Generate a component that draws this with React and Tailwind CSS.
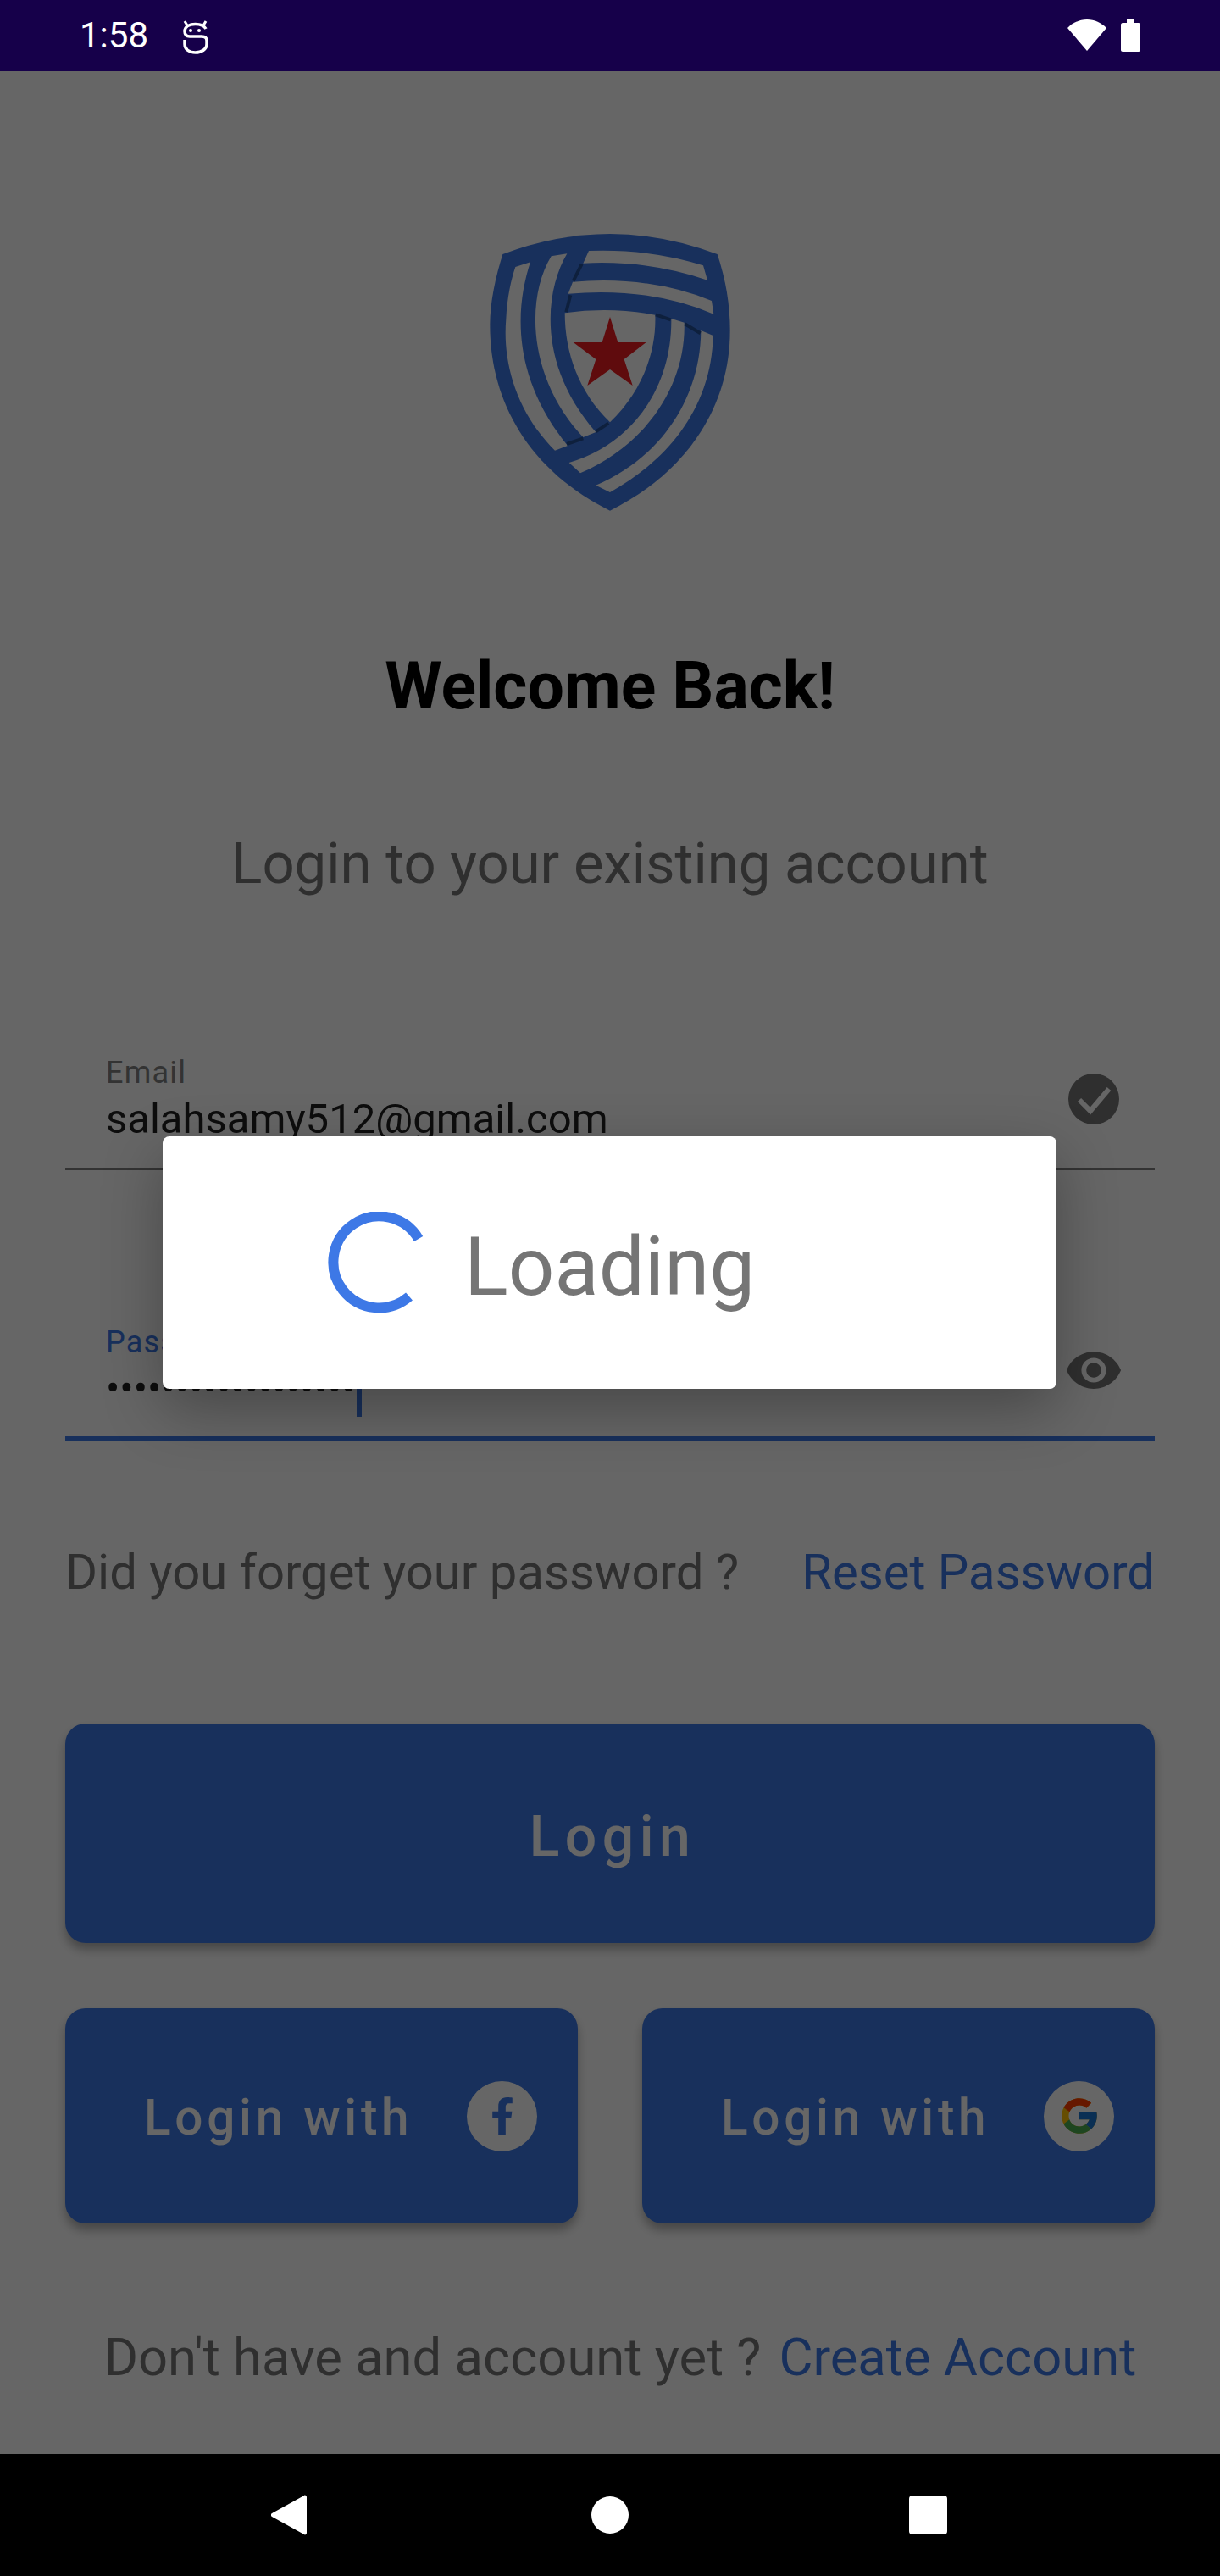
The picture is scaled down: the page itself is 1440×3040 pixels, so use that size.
import React from 'react';
import { FaFacebookF } from 'react-icons/fa';
import { FcGoogle } from 'react-icons/fc';

const Shield = () => (
  <svg viewBox="0 0 1080 1110" className="h-[370px] w-[360px]">
    <path fill="#3d78e6" d="M160 150 Q540 6 920 150 C950 240 965 330 965 420 C965 700 800 930 540 1058 C280 930 115 700 115 400 C115 320 135 230 160 150 Z" />
    {/* light bands */}
    <path fill="#fff" d="M465 138 Q680 130 870 190 L885 242 Q680 170 445 182 Z" />
    <path fill="#fff" d="M408 248 Q680 225 900 315 L907 362 Q680 265 392 290 Z" />
    <path fill="#fff" d="M205 195 L258 178 C205 340 190 580 390 828 L345 845 C200 700 160 520 172 380 C176 300 190 240 205 195 Z" />
    <path fill="#fff" d="M332 157 L388 148 C310 280 280 540 490 780 L445 798 C250 590 240 310 332 157 Z" />
    <path fill="#fff" d="M380 358 Q540 335 700 365 C705 500 650 640 540 745 C430 640 380 500 380 358 Z" />
    <path fill="#fff" d="M757 378 L803 392 C810 600 680 820 435 925 L395 888 C600 830 760 640 757 378 Z" />
    <path fill="#fff" d="M862 420 L905 438 C900 680 760 870 540 993 L490 968 C700 880 860 680 862 420 Z" />
    {/* seams where the bands cross */}
    <g stroke="#25509a" strokeWidth="12" fill="none">
      <path d="M440 185 L410 245" />
      <path d="M400 295 L385 355" />
      <path d="M702 364 L755 382" />
      <path d="M805 397 L860 430" />
      <path d="M387 822 L445 802" />
      <path d="M490 778 L535 748" />
    </g>
    <path fill="#ee1c22" d="M540 372 L568 462 L668 462 L590 522 L620 615 L540 558 L460 615 L490 522 L410 462 L512 462 Z" />
  </svg>
);

const StatusBar = () => (
  <div className="flex h-[84px] items-center justify-between bg-[#16004a] pl-[94px] pr-[94px] text-white">
    <div className="flex items-center gap-[25px]">
      <span className="text-[42px] leading-[84px]">1:58</span>
      <svg viewBox="0 0 60 64" className="h-[64px] w-[60px]" fill="none" stroke="#fff">
        <path strokeWidth="3.5" d="M43 24 C41 20 36 18.5 30.5 18.5 C24 18.5 18 21 18 27 C18 31 20 33 24 33 L38 33 C42 33 44 35 44 38 V42 C44 48 38 52 30.5 52 C23 52 18 48 18 42 V37" />
        <path strokeWidth="3" d="M18 15 L21 20 M43 15 L40 20" />
        <circle cx="25" cy="26" r="2" fill="#fff" stroke="none" />
        <circle cx="35" cy="26" r="2" fill="#fff" stroke="none" />
      </svg>
    </div>
    <div className="flex items-center gap-[17px]">
      <svg viewBox="0 0 46 38" className="h-[38px] w-[46px]">
        <path fill="#fff" d="M23 37 L0 10 C6 4 14 0 23 0 C32 0 40 4 46 10 Z" />
      </svg>
      <svg viewBox="0 0 23 38" className="h-[38px] w-[23px]">
        <path fill="#fff" d="M7 0 H16 V4 H21 C22 4 23 5 23 6 V36 C23 37 22 38 21 38 H2 C1 38 0 37 0 36 V6 C0 5 1 4 2 4 H7 Z" />
      </svg>
    </div>
  </div>
);

const NavBar = () => (
  <div className="flex h-[144px] items-center justify-between bg-black pl-[320px] pr-[322px]">
    <svg viewBox="0 0 42 48" className="h-[48px] w-[42px]">
      <path fill="#fff" d="M39 1 C40 0 42 1 42 3 V45 C42 47 40 48 39 47 L1 26 C-0.5 25 -0.5 23 1 22 Z" />
    </svg>
    <div className="ml-[5px] h-[44px] w-[44px] rounded-full bg-white" />
    <div className="h-[46px] w-[45px] rounded-[4px] bg-white" />
  </div>
);

const Field = ({ label, active, children, icon, line }) => (
  <div className={`flex items-start justify-between ${line}`}>
    <div className="flex-1 pl-[48px]">
      <div className={`text-[36px] leading-[44px] tracking-[1.2px] ${active ? 'text-[#3d78e6]' : 'text-[#808080]'}`}>{label}</div>
      {children}
    </div>
    {icon}
  </div>
);

const App = () => {
  return (
    <div className="flex h-[3040px] w-[1440px] flex-col overflow-hidden bg-white font-['Roboto',sans-serif]">
      <StatusBar />

      <div className="relative flex-1">
        {/* Login form */}
        <div className="flex flex-col px-[77px]">
          <div className="mt-[166px] flex justify-center">
            <Shield />
          </div>

          <h1 className="mt-[148px] text-center text-[77px] font-bold leading-[84px] text-black">Welcome Back!</h1>
          <p className="mt-[127px] text-center text-[67px] leading-[80px] text-[#757575]">Login to your existing account</p>

          <div className="mt-[181px]">
            <Field
              label="Email"
              line="h-[141px] border-b-[3px] border-[#808080] pt-[4px]"
              icon={
                <svg viewBox="0 0 60 60" className="mr-[42px] mt-[23px] h-[60px] w-[60px]">
                  <circle cx="30" cy="30" r="30" fill="#757575" />
                  <path d="M13 31 L26 44 L48 18" fill="none" stroke="#fff" strokeWidth="6" />
                </svg>
              }
            >
              <div className="pt-[2px] text-[49px] leading-[62px] text-[#212121]">salahsamy512@gmail.com</div>
            </Field>
          </div>

          <div className="mt-[177px]">
            <Field
              label="Password"
              active
              line="h-[143px] border-b-[6px] border-[#3d78e6] pt-[4px]"
              icon={
                <svg viewBox="0 0 24 24" className="mr-[37px] mt-[20px] h-[70px] w-[70px]" fill="#757575">
                  <path d="M12 4.5C7 4.5 2.73 7.61 1 12c1.73 4.39 6 7.5 11 7.5s9.27-3.11 11-7.5c-1.73-4.39-6-7.5-11-7.5zM12 17c-2.76 0-5-2.24-5-5s2.24-5 5-5 5 2.24 5 5-2.24 5-5 5zm0-8c-1.66 0-3 1.34-3 3s1.34 3 3 3 3-1.34 3-3-1.34-3-3-3z" />
                </svg>
              }
            >
              <div className="flex items-start pt-[2px]">
                <span className="text-[48.5px] leading-[62px] text-[#212121]">••••••••••••••••••</span>
                <span className="ml-[1px] h-[64px] w-[6px] bg-[#3d78e6]" />
              </div>
            </Field>
          </div>

          <div className="mt-[114px] flex h-[80px] items-center justify-between text-[58px]">
            <span className="text-[#757575]">Did you forget your password ?</span>
            <span className="text-[#3d78e6]">Reset Password</span>
          </div>

          <button className="mt-[139px] h-[259px] rounded-[24px] bg-[#3d78e6] pl-[6px] pt-[8px] text-[66px] font-medium tracking-[6.5px] text-white shadow-[0_8px_12px_rgba(0,0,0,0.3)]">
            Login
          </button>

          <div className="mt-[77px] grid grid-cols-2 gap-[76px]">
            <button className="flex h-[254px] items-center justify-between rounded-[24px] bg-[#3d78e6] pl-[93px] pr-[48px] text-white shadow-[0_8px_12px_rgba(0,0,0,0.3)]">
              <span className="pt-[6px] text-[58.5px] font-medium tracking-[4.7px]">Login with</span>
              <span className="flex h-[83px] w-[83px] items-center justify-center rounded-full bg-white text-[#3d78e6]">
                <FaFacebookF size={44} />
              </span>
            </button>
            <button className="flex h-[254px] items-center justify-between rounded-[24px] bg-[#3d78e6] pl-[93px] pr-[48px] text-white shadow-[0_8px_12px_rgba(0,0,0,0.3)]">
              <span className="pt-[6px] text-[58.5px] font-medium tracking-[4.7px]">Login with</span>
              <span className="flex h-[83px] w-[83px] items-center justify-center rounded-full bg-white">
                <FcGoogle size={50} />
              </span>
            </button>
          </div>

          <div className="mt-[118px] flex h-[80px] items-center justify-center gap-[21px] pl-[24px] text-[61.5px]">
            <span className="text-[#757575]">Don't have and account yet ?</span>
            <span className="text-[#3d78e6]">Create Account</span>
          </div>
        </div>

        {/* Dim layer behind the dialog */}
        <div className="absolute inset-0 bg-black/60" />

        {/* Loading dialog */}
        <div className="absolute left-[192px] top-[1257px] flex h-[298px] w-[1055px] items-center gap-[41px] rounded-[8px] bg-white pl-[195px] shadow-[0_24px_70px_rgba(0,0,0,0.3)]">
          <svg viewBox="0 0 120 120" className="h-[120px] w-[120px] shrink-0" fill="none">
            <path d="M107 32 A54 54 0 1 0 96 100" stroke="#3d78e6" strokeWidth="12" />
          </svg>
          <span className="pt-[10px] text-[96px] leading-[120px] text-[#757575]">Loading</span>
        </div>
      </div>

      <NavBar />
    </div>
  );
};

export default App;
